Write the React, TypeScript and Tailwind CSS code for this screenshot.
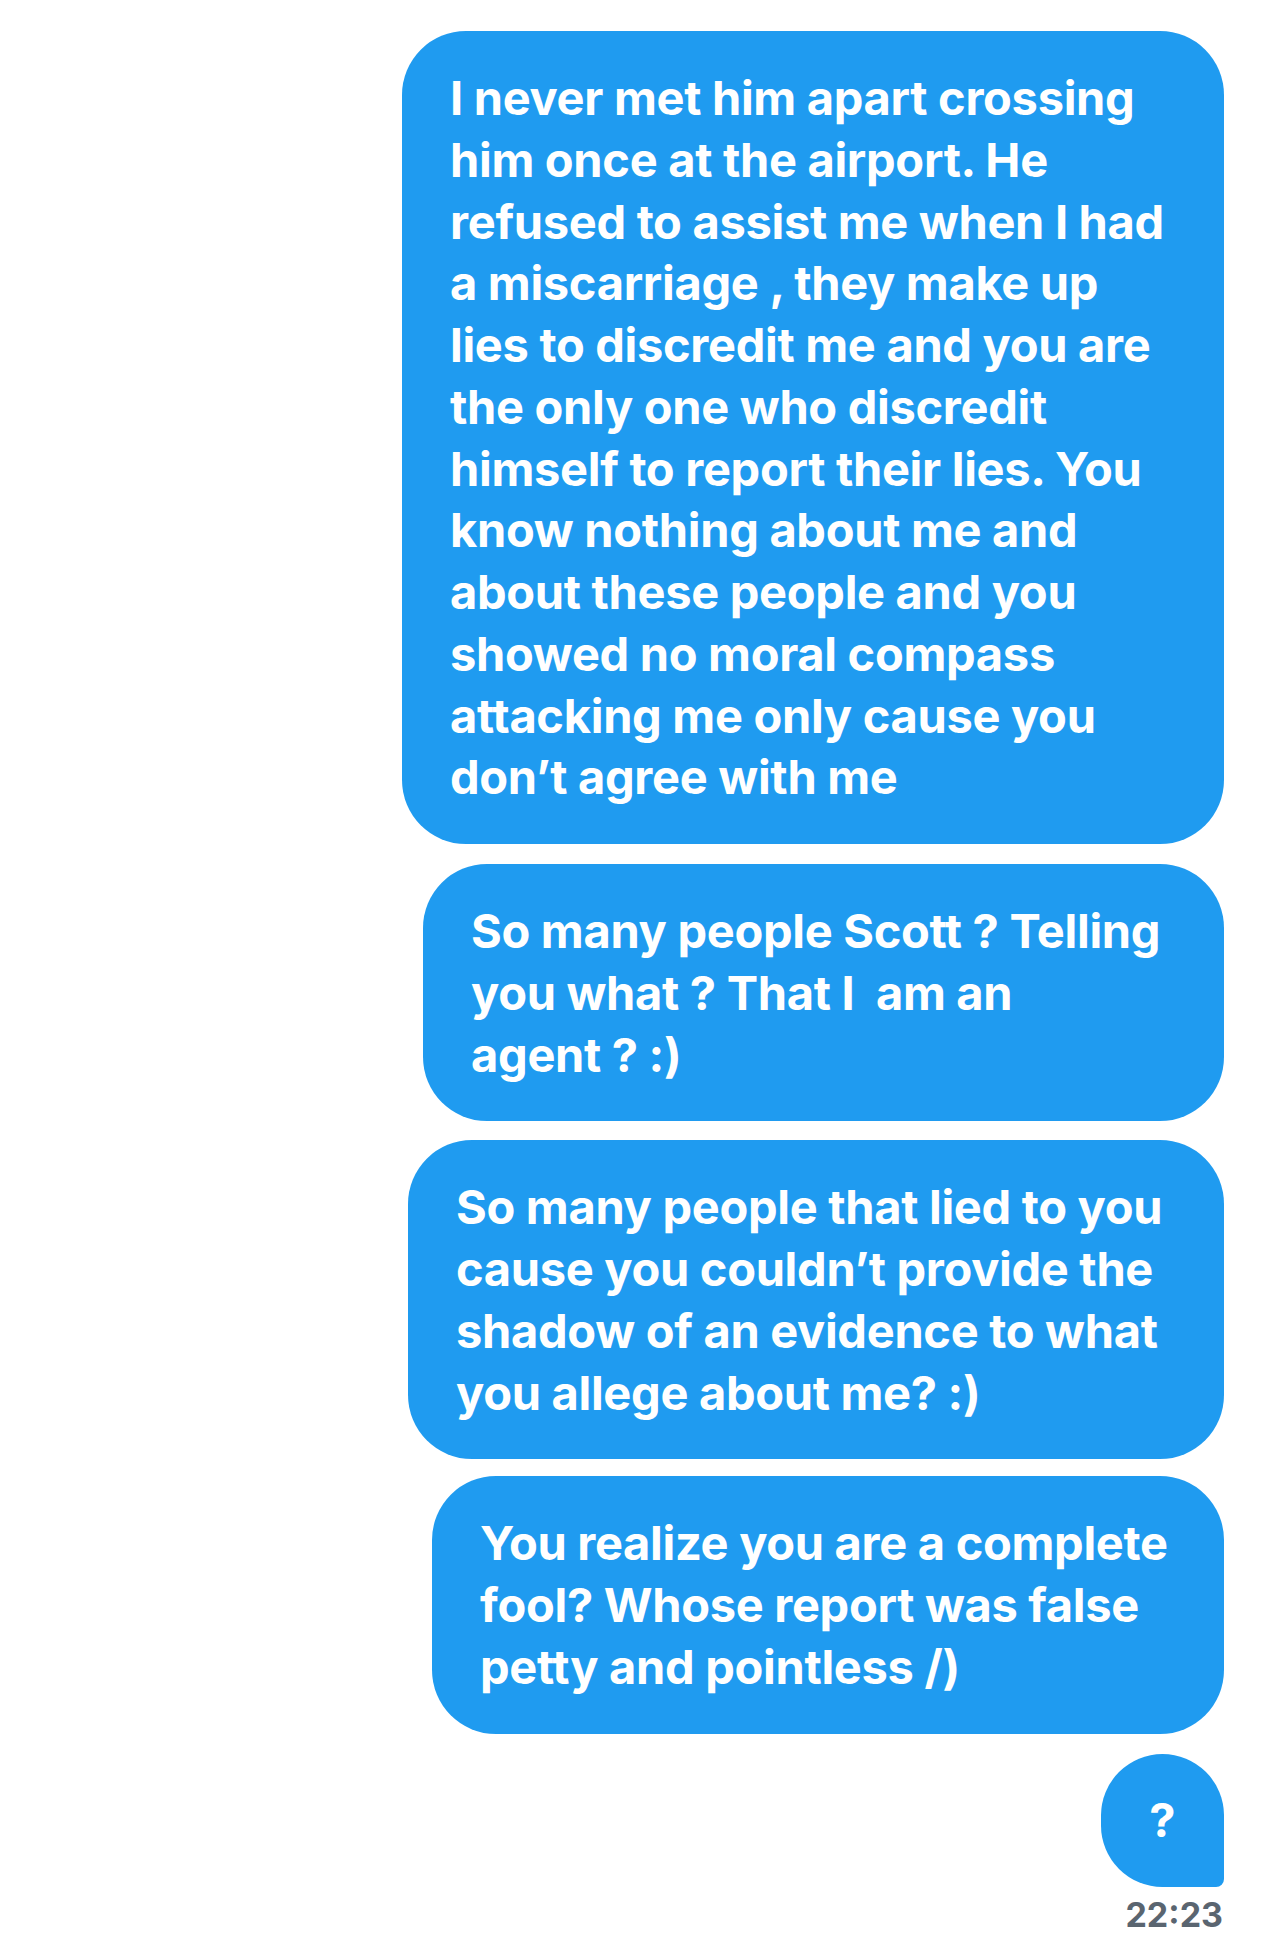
import React from "react";

const bubbles: { w: string; lines: string[]; mt: string }[] = [
  {
    w: "w-[822px]",
    mt: "mt-0",
    lines: [
      "I never met him apart crossing",
      "him once at the airport. He",
      "refused to assist me when I had",
      "a miscarriage , they make up",
      "lies to discredit me and you are",
      "the only one who discredit",
      "himself to report their lies. You",
      "know nothing about me and",
      "about these people and you",
      "showed no moral compass",
      "attacking me only cause you",
      "don\u2019t agree with me",
    ],
  },
  {
    w: "w-[801px]",
    mt: "mt-[20px]",
    lines: ["So many people Scott ? Telling", "you what ? That I  am an", "agent ? :)"],
  },
  {
    w: "w-[816px]",
    mt: "mt-[19px]",
    lines: [
      "So many people that lied to you",
      "cause you couldn\u2019t provide the",
      "shadow of an evidence to what",
      "you allege about me? :)",
    ],
  },
  {
    w: "w-[792px]",
    mt: "mt-[17px]",
    lines: ["You realize you are a complete", "fool? Whose report was false", "petty and pointless /)"],
  },
];

export default function App() {
  return (
    <div
      className="min-h-[1947px] w-full bg-white pt-[31px] pr-[60px] flex flex-col items-end"
      style={{ fontFamily: "Inter, 'Noto Sans', sans-serif" }}
    >
      {bubbles.map((b, i) => (
        <div
          key={i}
          className={`${b.w} ${b.mt} rounded-[64px] bg-[#1f9bf0] pl-[48px] pr-[36px] py-[36px] text-white font-bold text-[47px] leading-[61.75px] tracking-[-0.3px]`}
        >
          {b.lines.map((l, j) => (
            <div key={j} className="whitespace-pre">
              {l}
            </div>
          ))}
        </div>
      ))}
      <div className="mt-[20px] flex h-[133px] w-[123px] items-center justify-center rounded-[62px_62px_8px_62px] bg-[#1f9bf0] text-[47px] font-bold text-white">
        ?
      </div>
      <div className="mt-[8px] pr-[1px] text-[34px] font-bold leading-[40px] text-[#5a6570]">22:23</div>
    </div>
  );
}
